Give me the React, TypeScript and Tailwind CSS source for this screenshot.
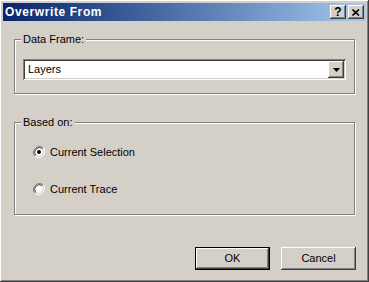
import React from 'react';

const face = 'bg-[#d4d0c8]';
const raised = 'shadow-[inset_-1px_-1px_0_#404040,inset_1px_1px_0_#ffffff,inset_-2px_-2px_0_#808080,inset_2px_2px_0_#d4d0c8]';

const GroupBox: React.FC<{ label: string; className?: string; children: React.ReactNode }> = ({ label, className, children }) => (
    <div className={`relative border border-[#808080] shadow-[inset_1px_1px_0_#ffffff,1px_1px_0_#ffffff] mr-[1px] ${className || ''}`}>
        <span className={`absolute left-[6px] -top-[8px] px-[2px] leading-[14px] ${face}`}>{label}</span>
        {children}
    </div>
);

const Radio: React.FC<{ checked?: boolean; label: string }> = ({ checked, label }) => (
    <div className="flex items-center h-[14px]">
        <svg width="12" height="12" viewBox="0 0 12 12" className="shrink-0">
            <path d="M10.2 1.8A6 6 0 0 0 1.8 10.2" stroke="#808080" strokeWidth="1" fill="none" />
            <path d="M1.8 10.2A6 6 0 0 0 10.2 1.8" stroke="#ffffff" strokeWidth="1" fill="none" />
            <circle cx="6" cy="6" r="4.6" fill="#ffffff" />
            <path d="M9.3 2.7A4.7 4.7 0 0 0 2.7 9.3" stroke="#404040" strokeWidth="1" fill="none" />
            <path d="M2.7 9.3A4.7 4.7 0 0 0 9.3 2.7" stroke="#d4d0c8" strokeWidth="1" fill="none" />
            {checked && <circle cx="6" cy="6" r="2" fill="#000000" />}
        </svg>
        <span className="ml-[5px]">{label}</span>
    </div>
);

const App: React.FC = () => {
    return (
        <div
            className={`w-[369px] h-[282px] ${face} p-[3px] flex flex-col text-[11px] text-black ${raised}`}
            style={{ fontFamily: '"Liberation Sans", Arial, sans-serif' }}
        >
            {/* title bar */}
            <div className="h-[18px] flex items-center pl-[2px] pr-[2px] bg-gradient-to-r from-[#0a246a] to-[#a6caf0]">
                <span className="text-white font-bold text-[12px] flex-1 tracking-[0.6px]">Overwrite From</span>
                <div className={`w-[16px] h-[14px] ${face} ${raised} flex items-center justify-center font-bold text-[12px] leading-none`}>?</div>
                <div className={`w-[16px] h-[14px] ${face} ${raised} ml-[2px] flex items-center justify-center`}>
                    <svg width="8" height="7" viewBox="0 0 8 7">
                        <path d="M0.5 0.5L7 6.5M7 0.5L0.5 6.5" stroke="#000" strokeWidth="1.6" />
                    </svg>
                </div>
            </div>

            <div className="flex-1 flex flex-col pl-[11px] pr-[10px] pt-[18px]">
                <GroupBox label="Data Frame:" className="h-[55px] pt-[19px] px-[8px]">
                    <div className="h-[21px] bg-white flex items-center shadow-[inset_1px_1px_0_#808080,inset_-1px_-1px_0_#ffffff,inset_2px_2px_0_#404040,inset_-2px_-2px_0_#d4d0c8] p-[2px]">
                        <span className="flex-1 pl-[3px]">Layers</span>
                        <div className={`w-[16px] h-[17px] ${face} ${raised} flex items-center justify-center`}>
                            <svg width="7" height="4" viewBox="0 0 7 4">
                                <path d="M0 0H7L3.5 4Z" fill="#000" />
                            </svg>
                        </div>
                    </div>
                </GroupBox>

                <GroupBox label="Based on:" className="h-[93px] mt-[28px] pt-[22px] pl-[18px]">
                    <div className="flex flex-col gap-[23px]">
                        <Radio checked label="Current Selection" />
                        <Radio label="Current Trace" />
                    </div>
                </GroupBox>

                <div className="flex justify-end gap-[11px] mt-[32px]">
                    <button className={`w-[75px] h-[23px] ${face} border border-black shadow-[inset_-1px_-1px_0_#404040,inset_1px_1px_0_#ffffff,inset_-2px_-2px_0_#808080]`}>
                        OK
                    </button>
                    <button className={`w-[75px] h-[23px] ${face} ${raised}`}>
                        Cancel
                    </button>
                </div>
            </div>
        </div>
    );
};

export default App;
